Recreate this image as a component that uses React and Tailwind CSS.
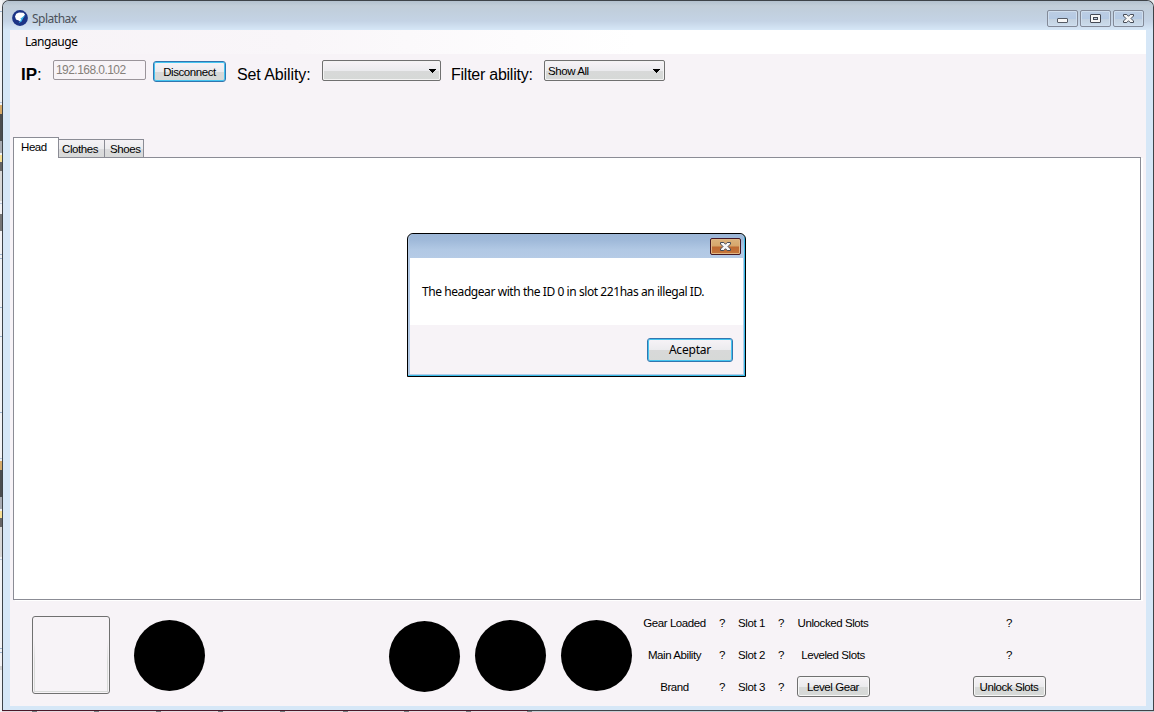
import React from "react";

const ui = "font-['Liberation_Sans',Arial,sans-serif] text-[11.5px] leading-[14px] tracking-[-0.42px] text-black whitespace-nowrap";
const segoe = "font-['Noto_Sans','Open_Sans',sans-serif] text-[12px] leading-[16px] whitespace-nowrap";
const face = "bg-[linear-gradient(180deg,#f7f3f7_0%,#ebebee_50%,#d8d9d9_51%,#d6d9d7_100%)]";

function Button({ children, active = false }) {
  return (
    <button
      className={`${ui} ${face} box-border flex h-[21px] w-[73px] shrink-0 items-center justify-center rounded-[3px] border ${
        active ? "border-[#3276b0] shadow-[inset_0_0_0_1px_#45c5f0]" : "border-[#707070] shadow-[inset_0_0_0_1px_#f7f7f7]"
      }`}
    >
      {children}
    </button>
  );
}

function Combo({ value, width }) {
  return (
    <div
      className={`${ui} ${face} ${width} flex h-[21px] shrink-0 items-center justify-between rounded-[2px] border border-[#707070] pr-1 pl-[3px] shadow-[inset_0_0_0_1px_#f3f3f3]`}
    >
      <span>{value}</span>
      <svg width="7" height="4" viewBox="0 0 7 4" shapeRendering="crispEdges">
        <path d="M0 0H7V1H6V2H5V3H4V4H3V3H2V2H1V1H0Z" fill="#000" />
      </svg>
    </div>
  );
}

function CloseGlyph() {
  return (
    <svg width="13" height="11" viewBox="0 0 13 11">
      <path d="M1.5 1.5H4.8L6.5 3.3L8.2 1.5H11.5V3L9 5.5L11.5 8V9.5H8.2L6.5 7.7L4.8 9.5H1.5V8L4 5.5L1.5 3Z" fill="#f7f7f7" stroke="#454a55" />
    </svg>
  );
}

function Caption({ children }) {
  return (
    <div className="flex h-[17px] w-[31px] items-center justify-center rounded-[2px] border border-[#838a98] bg-[linear-gradient(180deg,#bccde3_0%,#b5cae4_50%,#c3d1e0_55%,#cbdcec_100%)] shadow-[inset_0_0_0_1px_#cfdeee]">
      {children}
    </div>
  );
}

function TitleBar() {
  return (
    <header className="flex h-[29px] shrink-0 items-start justify-between bg-[linear-gradient(180deg,#b3c1ce_0px,#c2ced9_5px,#c1cfdd_10px,#c4d3e5_20px,#d6e7f7_29px)] pr-[9px] pl-[9px]">
      <div className="flex items-start gap-[3px] pt-[9px]">
        <svg width="17" height="17" viewBox="0 0 17 17">
          <circle cx="8" cy="8" r="7.9" fill="#1c3486" />
          <path d="M4.2 3.8L7 2.4L11.4 2.8L13 4.6L10.6 8L8.6 12L6.8 10.4L4 9.4L3 6.6Z" fill="#fff" />
          <path d="M13.6 4.8L8.2 8.8L9.2 9.6L6.6 13.2L9.6 11.6L11 8.6Z" fill="#38b4e8" />
        </svg>
        <span className={`${segoe} pt-px tracking-[-0.5px] text-[#4b5159]`}>Splathax</span>
      </div>
      <div className="flex gap-[2px] pt-[9px]">
        <Caption>
          <svg width="12" height="6" viewBox="0 0 12 6" className="mt-1">
            <rect x="0.5" y="0.5" width="10" height="4" rx="0.5" fill="#f7f7f7" stroke="#555b65" />
          </svg>
        </Caption>
        <Caption>
          <svg width="11" height="9" viewBox="0 0 11 9">
            <rect x="0.5" y="0.5" width="10" height="8" rx="0.5" fill="#f7f7f7" stroke="#454a55" />
            <rect x="3.5" y="3.5" width="4" height="2" fill="#c2cfdf" stroke="#454a55" />
          </svg>
        </Caption>
        <Caption>
          <CloseGlyph />
        </Caption>
      </div>
    </header>
  );
}

function Toolbar() {
  return (
    <div className="flex h-[83px] shrink-0 items-start text-black">
      <span className="mt-[11px] w-[43px] pl-[11px] font-['Liberation_Sans',Arial,sans-serif] text-[17px] leading-[20px]">
        <b>IP</b>:
      </span>
      <div className="mt-[6px] mr-[7px] h-[20px] w-[93px] rounded-[2px] border border-[#9a949a] bg-[#f7f3f7] pl-[2px] font-['Liberation_Sans',Arial,sans-serif] text-[12px] leading-[18px] tracking-[-0.55px] text-[#85807a]">
        192.168.0.102
      </div>
      <div className="mt-[7px] mr-[11px]">
        <Button active>Disconnect</Button>
      </div>
      <span className="mt-[11px] w-[85px] font-['Liberation_Sans',Arial,sans-serif] text-[16px] leading-[20px] tracking-[-0.1px] whitespace-nowrap">
        Set Ability:
      </span>
      <div className="mt-[6px] mr-[10px]">
        <Combo value="" width="w-[119px]" />
      </div>
      <span className="mt-[11px] w-[93px] font-['Liberation_Sans',Arial,sans-serif] text-[16px] leading-[20px] tracking-[-0.25px] whitespace-nowrap">
        Filter ability:
      </span>
      <div className="mt-[6px]">
        <Combo value="Show All" width="w-[121px]" />
      </div>
    </div>
  );
}

function Tabs() {
  const tab = `${ui} h-[18px] border border-b-0 border-[#8b8c95] bg-[linear-gradient(180deg,#f5f2f5_0%,#ececee_50%,#dcdcde_51%,#d8dad9_100%)] leading-[18px]`;
  return (
    <div className="flex h-[463px] shrink-0 flex-col pl-[3px]">
      <nav className="flex h-[20px] shrink-0 items-end">
        <div className={`${ui} z-10 -mb-px h-[21px] w-[46px] border border-b-0 border-[#8b8c95] bg-white pl-[7px] leading-[18px]`}>Head</div>
        <div className={`${tab} -ml-px w-[47px] pl-[3px]`}>Clothes</div>
        <div className={`${tab} -ml-px w-[40px] pl-[5px]`}>Shoes</div>
      </nav>
      <div className="h-[443px] w-[1128px] border border-[#8b8c95] bg-white shadow-[2px_1px_0_#fff]" />
    </div>
  );
}

function Disc({ className }) {
  return <div className={`size-[71.5px] shrink-0 rounded-full bg-black ${className}`} />;
}

function GearFooter() {
  return (
    <footer className="flex min-h-0 flex-1 items-start pl-[22px]">
      <div className="mt-[16px] h-[78px] w-[78px] shrink-0 rounded-[3px] border border-[#707070] bg-[#f7f3f7] p-px">
        <div className="h-full w-full border border-t-0 border-[#d8dad8] [border-image:linear-gradient(180deg,#f7f3f7_30%,#d8dad8_60%)_1]" />
      </div>
      <Disc className="mt-[19.5px] ml-[23.5px]" />
      <Disc className="mt-[20.5px] ml-[183.5px]" />
      <Disc className="mt-[19.5px] ml-[14.5px]" />
      <Disc className="mt-[19.5px] ml-[14.5px]" />
      <div className={`${ui} mt-[7px] ml-[3.5px] grid grid-cols-[78px_17px_42px_17px_87px_265px] grid-rows-[32px_32px_31px] items-center justify-items-center`}>
        <span>Gear Loaded</span>
        <span>?</span>
        <span>Slot 1</span>
        <span>?</span>
        <span>Unlocked Slots</span>
        <span>?</span>
        <span>Main Ability</span>
        <span>?</span>
        <span>Slot 2</span>
        <span>?</span>
        <span>Leveled Slots</span>
        <span>?</span>
        <span>Brand</span>
        <span>?</span>
        <span>Slot 3</span>
        <span>?</span>
        <Button>Level Gear</Button>
        <Button>Unlock Slots</Button>
      </div>
    </footer>
  );
}

function Dialog() {
  return (
    <div className="absolute top-[233px] left-[407px] flex h-[144px] w-[339px] flex-col rounded-t-[6px] border border-black bg-[#b5cbe6] px-[2px] pb-[2px] shadow-[inset_-1px_-1px_0_#38bce8]">
      <div className="-mx-[1px] flex h-[24px] shrink-0 justify-end rounded-t-[5px] bg-[linear-gradient(180deg,#9cb6d6_0%,#9fb9d9_25%,#b1c8e4_65%,#b5cbe6_100%)] pt-[4px] pr-[3px]">
        <div className="flex h-[17px] w-[31px] items-center justify-center rounded-[2px] border border-[#451824] bg-[linear-gradient(180deg,#dcb37c_0%,#d6a66a_48%,#bd6931_52%,#c6763c_100%)] shadow-[inset_0_0_0_1px_#e0b684]">
          <CloseGlyph />
        </div>
      </div>
      <div className={`${segoe} h-[67px] shrink-0 bg-white pt-[26px] pl-[12px] text-black`}>
        <span className="tracking-[-0.43px]">The headgear with the ID 0 in slot 221has an illegal ID.</span>
      </div>
      <div className="flex flex-1 justify-end bg-[#f7f3f7] pt-[13px] pr-[10px]">
        <button className={`${segoe} ${face} h-[24px] w-[86px] rounded-[3px] border border-[#3276b0] text-black shadow-[inset_0_0_0_1px_#45c5f0]`}>
          <span className="block leading-[20px] tracking-[-0.2px]">Aceptar</span>
        </button>
      </div>
    </div>
  );
}

function LeftBackdrop() {
  return (
    <svg width="2" height="712" className="shrink-0" shapeRendering="crispEdges">
      <rect width="2" height="712" fill="#f3f3f5" />
      {[105, 461].map((y) => (
        <g key={y}>
          <rect y={y - 3} width="2" height="1" fill="#b8c8dc" />
          <rect y={y} width="2" height="9" fill="#d6aa68" />
          <rect y={y + 9} width="2" height="27" fill="#4b4d4f" />
          <rect y={y + 36} width="2" height="12" fill="#a8abb2" />
          <rect y={y + 50} width="2" height="7" fill="#f7df94" />
          <rect y={y + 57} width="2" height="9" fill="#666566" />
          <rect y={y + 66} width="2" height="30" fill="#d8d8d8" />
          <rect y={y + 98} width="2" height="1" fill="#b8c8dc" />
        </g>
      ))}
      <rect y="214" width="2" height="17" fill="#777" />
      {[11, 254, 258, 307, 336, 412, 648, 652].map((y) => (
        <rect key={y} y={y} width="2" height="1" fill="#9eb5cf" />
      ))}
      <rect y="666" width="2" height="4" fill="#d4d4d4" />
    </svg>
  );
}

export default function App() {
  return (
    <div className="relative flex h-[712px] w-[1154px] overflow-hidden bg-[#e7e9ec]">
      <LeftBackdrop />
      <div className="flex w-[1152px] flex-col">
        <main className="flex h-[710px] flex-col overflow-hidden rounded-t-[7px] border border-b-0 border-[#3e4348] bg-[#d6e7f7]">
          <TitleBar />
          <div className="mr-[7px] ml-[7px] flex h-[676px] flex-col bg-[#f7f3f7]">
            <nav className={`${segoe} h-[24px] shrink-0 bg-[linear-gradient(90deg,#f7f3f7_0%,#f9f6f9_25%,#fff_55%,#fff_100%)] pt-[4px] pl-[15px] text-black`}>
              <span className="tracking-[-0.45px]">Langauge</span>
            </nav>
            <Toolbar />
            <Tabs />
            <GearFooter />
          </div>
        </main>
        <svg width="1152" height="2" className="block" shapeRendering="crispEdges">
          <rect width="1152" height="1" fill="#3e4348" />
          <rect width="526" height="1" fill="#4a1828" />
          <rect y="1" width="1152" height="1" fill="#c8ced4" />
          <rect y="1" width="526" height="1" fill="#e4d9df" />
          {[30, 92, 154, 216, 278, 341, 402, 464, 525].map((x) => (
            <rect key={x} x={x} y="1" width="5" height="1" fill="#747e83" />
          ))}
        </svg>
      </div>
      <Dialog />
    </div>
  );
}
